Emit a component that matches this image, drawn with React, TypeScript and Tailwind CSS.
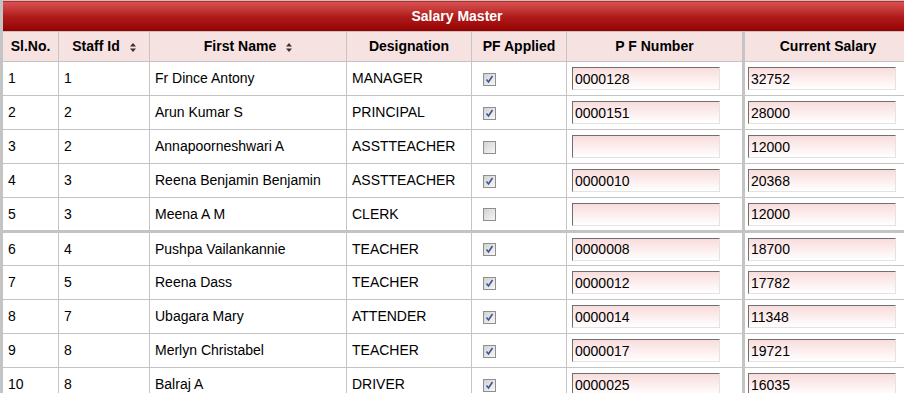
const rows = [
  { sl: 1, id: 1, name: "Fr Dince Antony", desig: "MANAGER", pf: true, pfNo: "0000128", salary: "32752" },
  { sl: 2, id: 2, name: "Arun Kumar S", desig: "PRINCIPAL", pf: true, pfNo: "0000151", salary: "28000" },
  { sl: 3, id: 2, name: "Annapoorneshwari A", desig: "ASSTTEACHER", pf: false, pfNo: "", salary: "12000" },
  { sl: 4, id: 3, name: "Reena Benjamin Benjamin", desig: "ASSTTEACHER", pf: true, pfNo: "0000010", salary: "20368" },
  { sl: 5, id: 3, name: "Meena A M", desig: "CLERK", pf: false, pfNo: "", salary: "12000" },
  { sl: 6, id: 4, name: "Pushpa Vailankannie", desig: "TEACHER", pf: true, pfNo: "0000008", salary: "18700" },
  { sl: 7, id: 5, name: "Reena Dass", desig: "TEACHER", pf: true, pfNo: "0000012", salary: "17782" },
  { sl: 8, id: 7, name: "Ubagara Mary", desig: "ATTENDER", pf: true, pfNo: "0000014", salary: "11348" },
  { sl: 9, id: 8, name: "Merlyn Christabel", desig: "TEACHER", pf: true, pfNo: "0000017", salary: "19721" },
  { sl: 10, id: 8, name: "Balraj A", desig: "DRIVER", pf: true, pfNo: "0000025", salary: "16035" },
  { sl: 11, id: 9, name: "Selvi M", desig: "AYAH", pf: true, pfNo: "0000031", salary: "9800" },
];

const SortIcon = () => (
  <svg width="6" height="9" viewBox="0 0 6 9" className="inline-block ml-[10px] align-middle">
    <path d="M0 3.5 L3 0 L6 3.5 Z" fill="#333" />
    <path d="M0 5.5 L3 9 L6 5.5 Z" fill="#333" />
  </svg>
);

const Check = ({ checked }: { checked: boolean }) => (
  <span className="inline-flex align-middle items-center justify-center w-[13px] h-[13px] border border-[#8f8f8f] bg-linear-to-br from-[#d2d2d2] to-[#f7f7f7]">
    {checked && (
      <svg width="9" height="9" viewBox="0 0 9 9">
        <path d="M1.5 4.5 L3.5 7 L7.5 1" stroke="#3b5598" strokeWidth="1.6" fill="none" />
      </svg>
    )}
  </span>
);

const Field = ({ value }: { value: string }) => (
  <input
    type="text"
    defaultValue={value}
    className="block w-[148px] h-[23px] px-[2px] text-[14px] text-black border border-t-[#6f6f6f] border-l-[#6f6f6f] border-r-[#e3e3e3] border-b-[#e3e3e3] bg-linear-to-b from-[#f9dcdc] to-white outline-none"
  />
);

const th = "border border-[#c4c4c4] font-bold text-[14px] text-black text-center h-[30px] p-0";
const td = "border border-[#c4c4c4] px-[5px] h-[34px] text-[14px] text-black";

export default function App() {
  return (
    <div className="w-[904px] h-[393px] overflow-hidden bg-white" style={{ fontFamily: '"Liberation Sans", Arial, sans-serif' }}>
      <div className="w-[912px] border-l-2 border-[#c4c4c4]">
        <table className="w-[910px] table-fixed border-collapse">
          <colgroup>
            <col className="w-[56px]" />
            <col className="w-[91px]" />
            <col className="w-[197px]" />
            <col className="w-[125px]" />
            <col className="w-[95px]" />
            <col className="w-[177px]" />
            <col />
          </colgroup>
          <thead>
            <tr>
              <th colSpan={7} className="h-[31px] border border-[#c4c4c4] bg-linear-to-b from-[#dc5353] via-[#b01b1b] to-[#940000] text-white font-bold text-[14px] text-center">
                Salary Master
              </th>
            </tr>
            <tr className="bg-[#f7e2e2]">
              <th className={th}>Sl.No.</th>
              <th className={th}>
                Staff Id
                <SortIcon />
              </th>
              <th className={th}>
                First Name
                <SortIcon />
              </th>
              <th className={th}>Designation</th>
              <th className={th}>PF Applied</th>
              <th className={`${th} border-r-[3px]`}>P F Number</th>
              <th className={th}>Current Salary</th>
            </tr>
          </thead>
          <tbody>
            {rows.map((r) => (
              <tr key={r.sl} className={r.sl === 6 ? "border-t-[3px] border-[#c4c4c4]" : ""}>
                <td className={td}>{r.sl}</td>
                <td className={td}>{r.id}</td>
                <td className={td}>{r.name}</td>
                <td className={td}>{r.desig}</td>
                <td className={`${td} pl-[11px]`}>
                  <Check checked={r.pf} />
                </td>
                <td className={`${td} border-r-[3px]`}>
                  <Field value={r.pfNo} />
                </td>
                <td className={`${td} pl-[3px]`}>
                  <Field value={r.salary} />
                </td>
              </tr>
            ))}
          </tbody>
        </table>
      </div>
    </div>
  );
}
